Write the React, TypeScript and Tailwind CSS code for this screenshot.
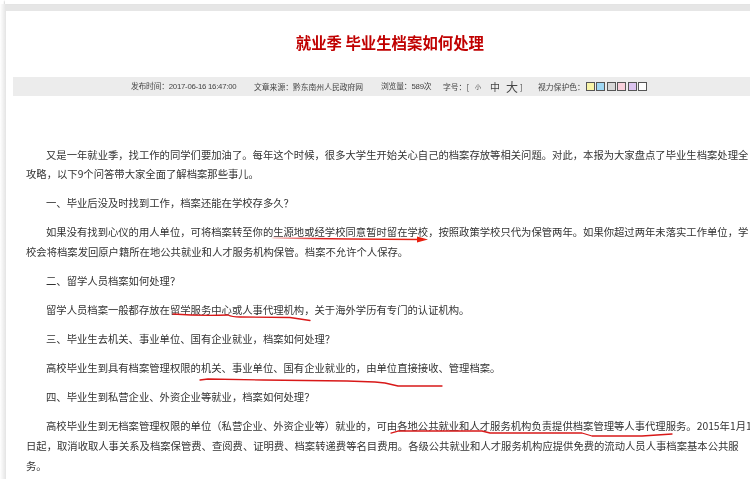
export default function App() {
  const indent = "pl-[20px]";
  const gap = "pl-[20px] mt-[9.5px]";
  return (
    <div className="relative h-[479px] w-[750px] overflow-hidden bg-white blur-[0.3px] font-['Noto_Sans_CJK_SC','Liberation_Sans',sans-serif]">
      <div className="ml-[5px] h-[4px] bg-white shadow-[0_1px_2px_#888]" />
      <div className="flex h-[475px] bg-linear-to-r from-white to-[#e4e4e4] to-[6px] pt-[7px]">
        <div className="absolute left-[5px] right-0 top-[5px] h-[6px] bg-[#e6e6e6]" />
        <div className="relative ml-[6px] h-full w-full bg-white pl-[7px]">
          <h1 className="h-[66px] pl-[15px] pt-[21px] text-center text-[15.4px] leading-[20px] font-bold text-[#c00000]">
            就业季 毕业生档案如何处理
          </h1>
          <div className="flex h-[19px] items-center whitespace-nowrap bg-[#ececec] pl-[118px] text-[7.8px] text-[#444]">
            <span className="w-[123px] font-['Liberation_Sans','Noto_Sans_CJK_SC',sans-serif] tracking-[-0.25px]">发布时间：2017-06-16 16:47:00</span>
            <span className="w-[127px]">文章来源：黔东南州人民政府网</span>
            <span className="w-[62px] font-['Liberation_Sans','Noto_Sans_CJK_SC',sans-serif] tracking-[-0.2px]">浏览量：589次</span>
            <span className="w-[32px]">字号：[</span>
            <span className="w-[15px] text-[6px]">小</span>
            <span className="w-[16px] text-[10px]">中</span>
            <span className="w-[14px] text-[12px]">大</span>
            <span className="w-[18px]">]</span>
            <span className="w-[48px]">视力保护色：</span>
            <div className="flex gap-[1.4px]">
              <i className="block size-[9px] border border-[#555] bg-[#f8f4a8]" />
              <i className="block size-[9px] border border-[#555] bg-[#a0d8f4]" />
              <i className="block size-[9px] border border-[#555] bg-[#d8d8d8]" />
              <i className="block size-[9px] border border-[#555] bg-[#f8d0dc]" />
              <i className="block size-[9px] border border-[#555] bg-[#dcc4f0]" />
              <i className="block size-[9px] border border-[#555] bg-white" />
            </div>
          </div>
          <div className="whitespace-nowrap pl-[13px] pt-[48.5px] text-[10.33px] leading-[19.6px] text-[#333]">
            <div className={indent}>又是一年就业季，找工作的同学们要加油了。每年这个时候，很多大学生开始关心自己的档案存放等相关问题。对此，本报为大家盘点了毕业生档案处理全</div>
            <div>攻略，以下9个问答带大家全面了解档案那些事儿。</div>
            <div className={gap}>一、毕业后没及时找到工作，档案还能在学校存多久？</div>
            <div className={gap}>如果没有找到心仪的用人单位，可将档案转至你的生源地或经学校同意暂时留在学校，按照政策学校只代为保管两年。如果你超过两年未落实工作单位，学</div>
            <div>校会将档案发回原户籍所在地公共就业和人才服务机构保管。档案不允许个人保存。</div>
            <div className={gap}>二、留学人员档案如何处理？</div>
            <div className={gap}>留学人员档案一般都存放在留学服务中心或人事代理机构，关于海外学历有专门的认证机构。</div>
            <div className={gap}>三、毕业生去机关、事业单位、国有企业就业，档案如何处理？</div>
            <div className={gap}>高校毕业生到具有档案管理权限的机关、事业单位、国有企业就业的，由单位直接接收、管理档案。</div>
            <div className={gap}>四、毕业生到私营企业、外资企业等就业，档案如何处理？</div>
            <div className={gap}>高校毕业生到无档案管理权限的单位（私营企业、外资企业等）就业的，可由各地公共就业和人才服务机构负责提供档案管理等人事代理服务。2015年1月1</div>
            <div>日起，取消收取人事关系及档案保管费、查阅费、证明费、档案转递费等名目费用。各级公共就业和人才服务机构应提供免费的流动人员人事档案基本公共服</div>
            <div>务。</div>
          </div>
        </div>
      </div>
      <svg className="absolute left-0 top-0" width="750" height="479" fill="none" strokeLinecap="round" strokeLinejoin="round">
        <defs>
          <linearGradient id="fade" x1="273" x2="420" y1="0" y2="0" gradientUnits="userSpaceOnUse">
            <stop offset="0" stopColor="#e02020" stopOpacity="0.2" />
            <stop offset="0.3" stopColor="#e02020" />
            <stop offset="1" stopColor="#e82010" />
          </linearGradient>
        </defs>
        <path d="M273 238 L350 239 L420 239.5" stroke="url(#fade)" strokeWidth="1.6" />
        <path d="M417 236.5 L428 239.5 L417 242.5 Z" fill="#e82010" />
        <path d="M173 314 Q200 316 228 315 Q232 317 240 317 L290 317.5 L310 320.5" stroke="#d81818" strokeWidth="1.3" />
        <path d="M200 380 L208 379 L263 380 L347 381 L375 382 L385 383 L398 386 L442 386" stroke="#d81818" strokeWidth="1.3" />
        <path d="M391 433 L398 431 L482 431 L490 433 L582 433 L592 436 L642 436 L672 434" stroke="#d81818" strokeWidth="1.3" />
      </svg>
    </div>
  );
}
